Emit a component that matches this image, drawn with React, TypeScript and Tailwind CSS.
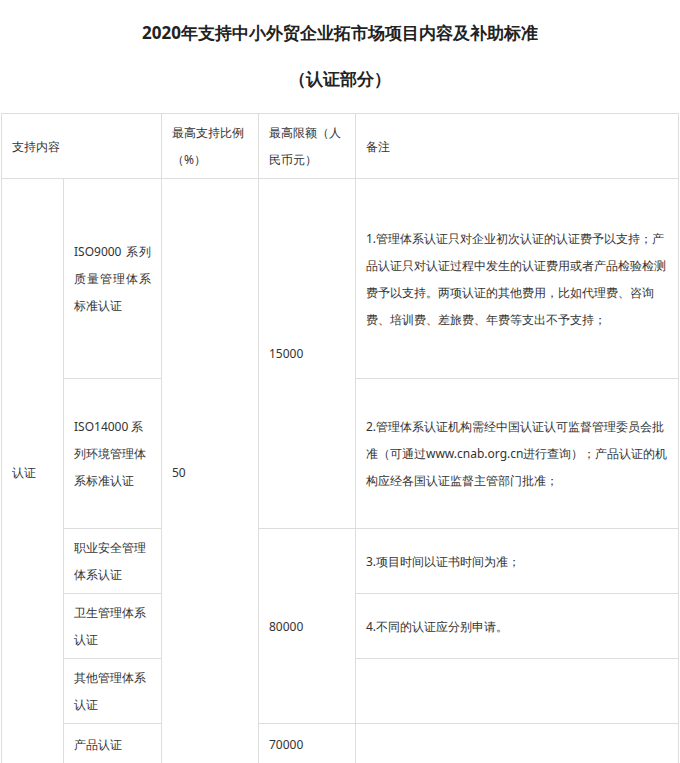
export default function App() {
  const td = "border border-[#dddddd] px-[10px] align-middle text-[12px] leading-[27px] text-[#333]";
  return (
    <div className="w-[680px] bg-white font-['Noto_Sans_CJK_SC',sans-serif]">
      <h1 className="pt-[20px] text-center text-[17px] font-bold leading-[26px] text-[#222]">
        2020年支持中小外贸企业拓市场项目内容及补助标准
      </h1>
      <h2 className="mt-[20px] text-center text-[17px] font-bold leading-[26px] text-[#222]">（认证部分）</h2>
      <table className="mt-[21px] ml-[1px] w-[678px] table-fixed border-collapse">
        <colgroup>
          <col className="w-[62px]" />
          <col className="w-[98px]" />
          <col className="w-[97px]" />
          <col className="w-[97px]" />
          <col />
        </colgroup>
        <tbody>
          <tr className="h-[65px]">
            <td colSpan={2} className={td}>支持内容</td>
            <td className={td}>最高支持比例（%）</td>
            <td className={td}>最高限额（人民币元）</td>
            <td className={td}>备注</td>
          </tr>
          <tr className="h-[200px]">
            <td rowSpan={6} className={td}>认证</td>
            <td className={td + " text-justify"}>ISO9000 系列质量管理体系标准认证</td>
            <td rowSpan={6} className={td}>50</td>
            <td rowSpan={2} className={td}>15000</td>
            <td className={td}>1.管理体系认证只对企业初次认证的认证费予以支持；产品认证只对认证过程中发生的认证费用或者产品检验检测费予以支持。两项认证的其他费用，比如代理费、咨询费、培训费、差旅费、年费等支出不予支持；</td>
          </tr>
          <tr className="h-[150px]">
            <td className={td}>ISO14000 系列环境管理体系标准认证</td>
            <td className={td}>2.管理体系认证机构需经中国认证认可监督管理委员会批准（可通过www.cnab.org.cn进行查询）；产品认证的机构应经各国认证监督主管部门批准；</td>
          </tr>
          <tr className="h-[65px]">
            <td className={td}>职业安全管理体系认证</td>
            <td rowSpan={3} className={td}>80000</td>
            <td className={td}>3.项目时间以证书时间为准；</td>
          </tr>
          <tr className="h-[65px]">
            <td className={td}>卫生管理体系认证</td>
            <td className={td}>4.不同的认证应分别申请。</td>
          </tr>
          <tr className="h-[65px]">
            <td className={td}>其他管理体系认证</td>
            <td className={td}></td>
          </tr>
          <tr className="h-[42px]">
            <td className={td}>产品认证</td>
            <td className={td}>70000</td>
            <td className={td}></td>
          </tr>
        </tbody>
      </table>
    </div>
  );
}
